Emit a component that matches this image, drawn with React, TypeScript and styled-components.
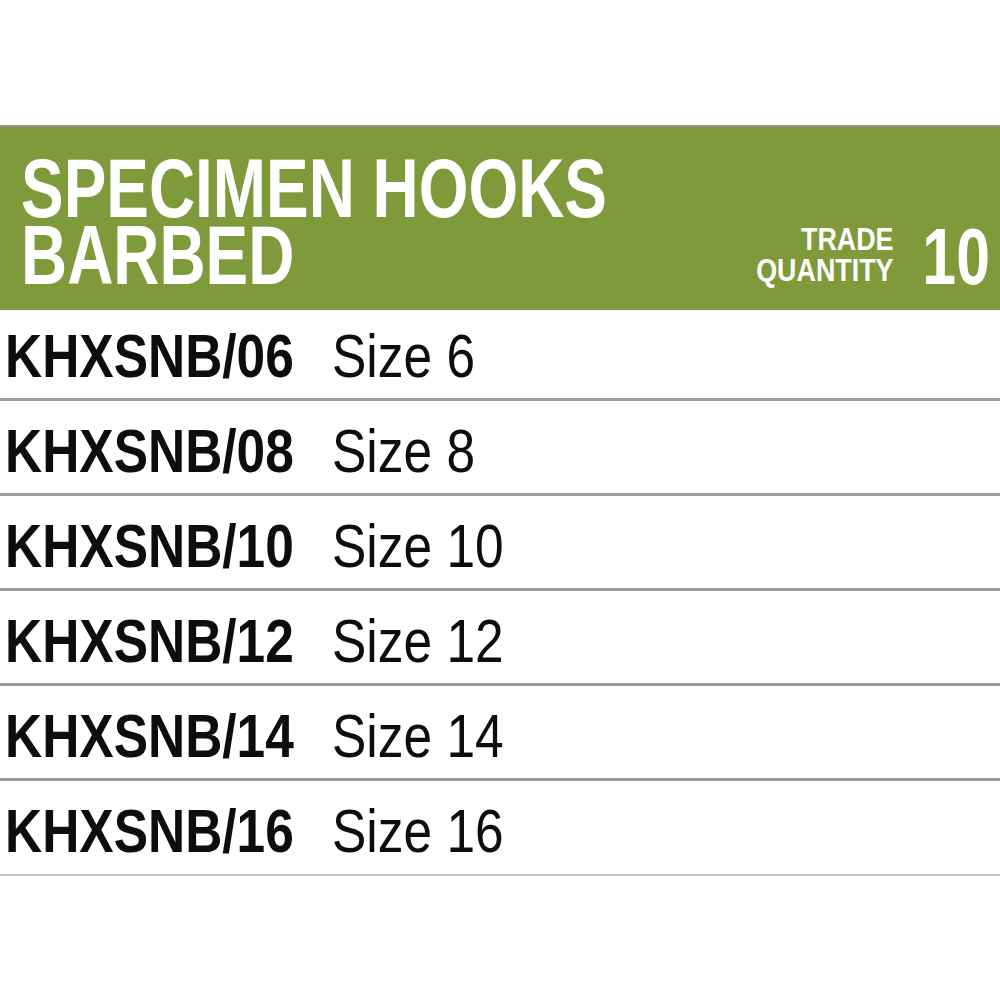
import styled, { createGlobalStyle } from 'styled-components';

const GlobalStyle = createGlobalStyle`
  html, body {
    margin: 0;
    padding: 0;
    background: #ffffff;
  }
  body {
    font-family: "Liberation Sans", Arial, sans-serif;
  }
`;

const rows = [
  { code: 'KHXSNB/06', size: 'Size 6' },
  { code: 'KHXSNB/08', size: 'Size 8' },
  { code: 'KHXSNB/10', size: 'Size 10' },
  { code: 'KHXSNB/12', size: 'Size 12' },
  { code: 'KHXSNB/14', size: 'Size 14' },
  { code: 'KHXSNB/16', size: 'Size 16' },
];

function App() {
  return (
    <>
      <GlobalStyle />
      <Page>
        <Header>
          <Title>
            <TitleLine>SPECIMEN HOOKS</TitleLine>
            <TitleLine>BARBED</TitleLine>
          </Title>
          <Trade>
            <TradeLabel>
              <TradeLine>TRADE</TradeLine>
              <TradeLine>QUANTITY</TradeLine>
            </TradeLabel>
            <TradeValue>10</TradeValue>
          </Trade>
        </Header>
        <List>
          {rows.map((r, i) => (
            <Row key={r.code} $first={i === 0} $last={i === rows.length - 1}>
              <Line>
                <Code>{r.code}</Code>
                <Size>{r.size}</Size>
              </Line>
            </Row>
          ))}
        </List>
      </Page>
    </>
  );
}

export default App;

const Page = styled.div`
  width: 1000px;
  height: 1000px;
  padding-top: 125px;
  box-sizing: border-box;
  background: #ffffff;
  overflow: hidden;
`;

// condensed look: Helvetica Condensed isn't available, so Arial widths are squeezed
const Header = styled.div`
  height: 185px;
  box-sizing: border-box;
  border-top: 2px solid #8e9884;
  background: #7f9a3b;
  display: flex;
  justify-content: space-between;
  align-items: flex-start;
  padding: 32px 10px 0 21px;
  color: #ffffff;
`;

const Title = styled.h1`
  flex: 1;
  min-width: 0;
  margin: 0;
  display: flex;
  flex-direction: column;
  gap: 7px;
  font-size: 83px;
  font-weight: 700;
  white-space: nowrap;
  transform: scaleX(0.77);
  transform-origin: left top;
`;

const TitleLine = styled.span`
  display: block;
  height: 60px;
  line-height: 60px;
`;

const Trade = styled.div`
  flex: none;
  display: flex;
  align-items: flex-start;
  gap: 7px;
  margin-top: 58px;
`;

const TradeLabel = styled.div`
  margin-top: 11px;
  display: flex;
  flex-direction: column;
  align-items: flex-end;
  gap: 8px;
  font-size: 32px;
  font-weight: 700;
  transform: scaleX(0.84);
  transform-origin: right top;
`;

const TradeLine = styled.span`
  display: block;
  height: 23px;
  line-height: 23px;
`;

const TradeValue = styled.div`
  font-size: 80px;
  line-height: 80px;
  font-weight: 700;
  transform: scaleX(0.76);
  transform-origin: right top;
`;

const List = styled.div`
  display: flex;
  flex-direction: column;
`;

const Row = styled.div<{ $first: boolean; $last: boolean }>`
  height: ${({ $first }) => ($first ? '91px' : '95px')};
  box-sizing: border-box;
  padding: ${({ $first }) => ($first ? '15px' : '19px')} 0 0 5px;
  border-bottom: ${({ $last }) => ($last ? '2px solid #c2c2c2' : '3px solid #9b9b9b')};
  color: #0d0d0d;
`;

const Line = styled.div`
  display: inline-flex;
  gap: 46px;
  font-size: 62px;
  line-height: 62px;
  white-space: nowrap;
  transform: scaleX(0.83);
  transform-origin: left top;
`;

const Code = styled.span`
  font-weight: 700;
`;

const Size = styled.span`
  font-weight: 400;
`;
